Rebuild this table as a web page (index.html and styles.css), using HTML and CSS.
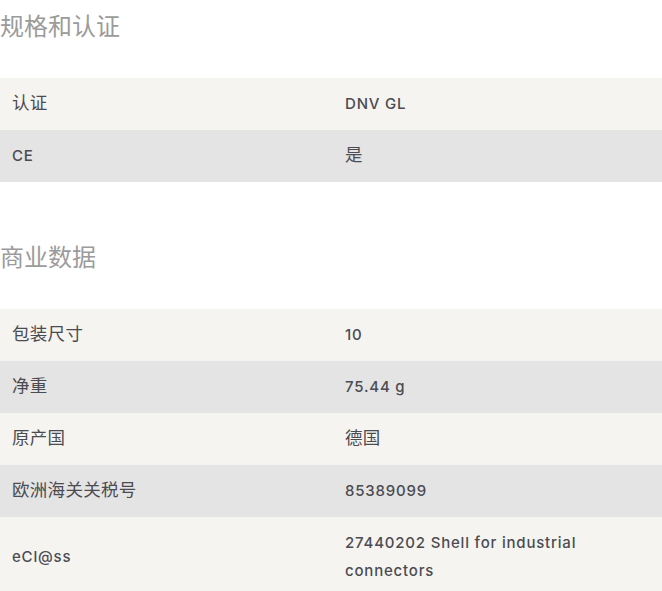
FILE: index.html
```html
<!DOCTYPE html>
<html lang="zh">
<head>
<meta charset="utf-8">
<link rel="stylesheet" href="styles.css">
</head>
<body>
<section class="section">
  <h2 class="title">规格和认证</h2>
  <table class="specs">
    <tr class="odd"><td class="label"><span class="zh">认证</span></td><td class="value">DNV GL</td></tr>
    <tr class="even"><td class="label">CE</td><td class="value"><span class="zh">是</span></td></tr>
  </table>
</section>
<section class="section">
  <h2 class="title">商业数据</h2>
  <table class="specs">
    <tr class="odd"><td class="label"><span class="zh">包装尺寸</span></td><td class="value">10</td></tr>
    <tr class="even"><td class="label"><span class="zh">净重</span></td><td class="value">75.44 g</td></tr>
    <tr class="odd"><td class="label"><span class="zh">原产国</span></td><td class="value"><span class="zh">德国</span></td></tr>
    <tr class="even"><td class="label"><span class="zh">欧洲海关关税号</span></td><td class="value">85389099</td></tr>
    <tr class="odd"><td class="label">eCl@ss</td><td class="value">27440202 Shell for industrial connectors</td></tr>
  </table>
</section>
</body>
</html>
```

FILE: styles.css
```css
html, body {
  margin: 0;
  padding: 0;
  background: #ffffff;
}
body {
  font-family: "Inter", "Noto Sans CJK SC", sans-serif;
  color: #4b4b52;
}
.section + .section {
  margin-top: 49px;
}
.title {
  margin: 0 0 28px 0;
  font-family: "Noto Sans CJK SC", sans-serif;
  font-weight: 400;
  font-size: 24px;
  line-height: 50px;
  color: #9b9b9b;
}
.specs {
  width: 100%;
  border-collapse: collapse;
  font-size: 15px;
  line-height: 28px;
  font-weight: 500;
  letter-spacing: 0.8px;
}
.specs td {
  padding: 12px 12px;
  vertical-align: middle;
  width: 50%;
}
.specs td.value {
  padding-left: 14px;
}
.zh {
  font-family: "Noto Sans CJK SC", sans-serif;
  font-weight: 400;
  font-size: 17.5px;
  line-height: 1;
  letter-spacing: 0.3px;
}
.odd { background: #f5f4f0; }
.even { background: #e4e4e4; }
```
